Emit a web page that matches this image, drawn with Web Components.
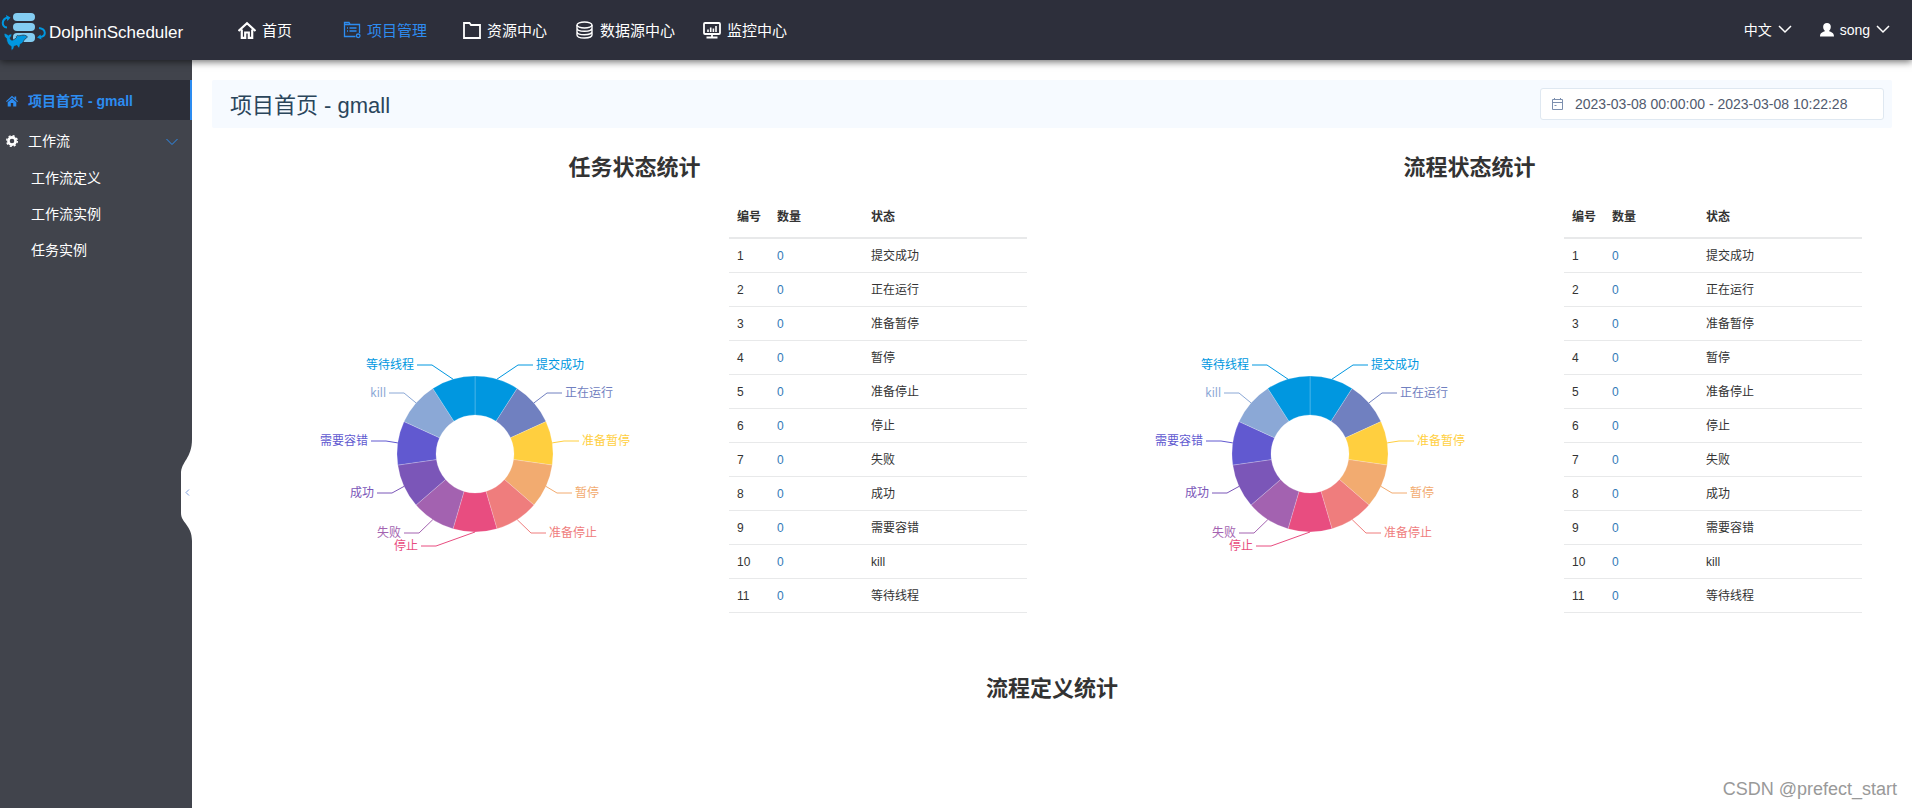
<!DOCTYPE html>
<html lang="zh-CN">
<head>
<meta charset="utf-8">
<title>DolphinScheduler</title>
<style>
  html, body { margin: 0; }
  body { font-family: "Liberation Sans", "Noto Sans CJK SC", sans-serif; font-size: 14px; color: #333; background: #fff; }
</style>
</head>
<body>
<ds-app></ds-app>
<script>
const define = (name, html, setup) => {
  const template = document.createElement('template');
  template.innerHTML = html;
  customElements.define(name, class extends HTMLElement {
    constructor() {
      super();
      this.attachShadow({ mode: 'open' }).append(template.content.cloneNode(true));
    }
    connectedCallback() {
      if (setup && !this.ready) { this.ready = true; setup(this, this.shadowRoot); }
    }
  });
};

const STATES = [
  { name: '提交成功', color: '#0097e0', x: 43, y: -89 },
  { name: '正在运行', color: '#7080c0', x: 72, y: -61 },
  { name: '准备暂停', color: '#ffcf3f', x: 89, y: -13 },
  { name: '暂停', color: '#f2ab70', x: 82, y: 39 },
  { name: '准备停止', color: '#ef7d7d', x: 56, y: 79 },
  { name: '停止', color: '#e84d80', x: -39, y: 92 },
  { name: '失败', color: '#a362b0', x: -56, y: 79 },
  { name: '成功', color: '#7b56b8', x: -83, y: 39 },
  { name: '需要容错', color: '#6159d0', x: -89, y: -13 },
  { name: 'kill', color: '#8ba8d6', x: -71, y: -61 },
  { name: '等待线程', color: '#0097e0', x: -43, y: -89 }
];

define('ds-nav-item', `
<style>
  :host { display: block; }
  a { display: flex; align-items: center; gap: 6px; color: #fff; font-size: 15px; line-height: 20px; text-decoration: none; white-space: nowrap; }
  :host([active]) a { color: #2d8cf0; }
  span { padding-top: 1px; }
  ::slotted(svg) { width: 18px; height: 18px; flex: none; }
</style>
<a href="#"><slot name="icon"></slot><span><slot></slot></span></a>`);

define('ds-header', `
<style>
  :host { display: flex; align-items: center; height: 60px; background: #2d2f3b; color: #fff; position: relative; z-index: 2; box-shadow: 0 2px 7px rgba(0,0,0,.55); }
  .logo { display: flex; align-items: center; width: 238px; gap: 3px; color: #fff; text-decoration: none; font-size: 17px; line-height: 20px; }
  .logo svg { width: 46px; height: 50px; flex: none; }
  .logo span { padding-top: 5px; }
  nav { display: grid; grid-template-columns: 105px 120px 113px 127px auto; }
  .right { margin-left: auto; display: flex; gap: 28px; padding-right: 22px; }
  button { display: flex; align-items: center; gap: 6px; padding: 0; border: 0; background: none; color: #fff; font: inherit; font-size: 14px; line-height: 20px; }
</style>
<a class="logo" href="#">
  <svg viewBox="0 0 46 50">
    <g fill="#84cdf2"><rect x="13" y="8" width="22" height="8" rx="4"/><rect x="13" y="18" width="22" height="8" rx="4"/><rect x="13" y="28" width="22" height="9" rx="4"/></g>
    <g fill="none" stroke="#0097e0" stroke-width="2"><path d="M8 12.500C1.500 13.500 1 22 7 22.500M39 23C46.500 24 46.500 31.500 40 32"/></g>
    <path fill="#0097e0" d="M6 10l4.500 2.500L7.500 16zM40.500 29.500l-3.500 3 4.500 2z"/>
    <path fill="#0097e0" stroke="#2d2f3b" stroke-width=".7" d="M4 28.500c2 0 3 .5 4.200 1.800 1-1 2-1.300 3.800-1.300-.3 2-1.300 3-2 4 .5 1.800 1.500 2.500 3 2 1.500-.5 2.500-1.500 3.500-2.500-.5-1 .2-1.800 1-2 1 .3 1.500.3 2.500.2 2-.5 4-1 6 0 1.300.5 1.500 1 .8 2-1 1.200-1.800 1.300-2.500 1.800-.5 2-2 4-4.300 5 .3 1.500-.3 2.500-1.500 3.500l-1.500-2.500c-1.500.5-2.500.7-3 1 .2 1.500-.8 3-2.500 4-.5-1.500-.5-3-.3-4C8 40 6.500 37 6.500 33.500 4.800 32.500 4 30.500 4 28.500z"/>
  </svg>
  <span>DolphinScheduler</span>
</a>
<nav>
  <ds-nav-item><svg slot="icon" viewBox="0 0 18 18" fill="none" stroke="currentColor" stroke-width="2.200"><path d="M.5 10L9 2.300l8.500 7.700M3.800 8.500v8.300h3.400v-5.300h3.600v5.300h3.400V8.500"/></svg>首页</ds-nav-item>
  <ds-nav-item active><svg slot="icon" viewBox="0 0 18 18" fill="none" stroke="currentColor" stroke-width="1.300"><path d="M12.500 15.500H1.500v-14H6l1.200 2H16.500v8.500M1.500 3.500h5M4 7h1M6.500 7h7M4 10h1M6.500 10h7"/><circle cx="15.200" cy="14.800" r="1.800"/></svg>项目管理</ds-nav-item>
  <ds-nav-item><svg slot="icon" viewBox="0 0 18 18" fill="none" stroke="currentColor" stroke-width="1.800"><path d="M1 2h5.500l1.500 2H17v13H1z"/></svg>资源中心</ds-nav-item>
  <ds-nav-item><svg slot="icon" viewBox="0 0 18 18" fill="none" stroke="currentColor" stroke-width="1.400"><ellipse cx="8.500" cy="4" rx="7.500" ry="3"/><path d="M1 4v10c0 4 15 4 15 0V4M1 7.300c0 4 15 4 15 0M1 10.700c0 4 15 4 15 0"/></svg>数据源中心</ds-nav-item>
  <ds-nav-item><svg slot="icon" viewBox="0 0 18 18" fill="none" stroke="currentColor" stroke-width="1.800"><rect x="1" y="2" width="16" height="11" rx="1"/><path d="M9 13v3M3.500 16.500h11"/><path stroke-width="1.600" d="M5 11V8.500M7.700 11V6.500M10.400 11V7.500M13 11V5"/></svg>监控中心</ds-nav-item>
</nav>
<div class="right">
  <button type="button">中文<svg width="14" height="14" viewBox="0 0 14 14" fill="none" stroke="currentColor" stroke-width="1.500"><path d="M1 3l6 6 6-6"/></svg></button>
  <button type="button"><svg width="14" height="14" viewBox="0 0 14 14" fill="currentColor"><path d="M7 0c5 0 4.500 6 2 8 2 1.200 5 1.500 5 5.500H0C0 9.500 3 9.200 5 8 2.500 6 2 0 7 0z"/></svg>song<svg width="14" height="14" viewBox="0 0 14 14" fill="none" stroke="currentColor" stroke-width="1.500"><path d="M1 3l6 6 6-6"/></svg></button>
</div>`);

define('ds-sidebar', `
<style>
  :host { display: block; width: 192px; flex: none; background: #41444c; position: relative; }
  nav { padding-top: 20px; }
  a { display: flex; align-items: center; box-sizing: border-box; color: #fff; text-decoration: none; font-size: 14px; line-height: 20px; }
  .top { height: 40px; padding: 2px 14px 0 6px; gap: 10px; }
  .active { background: #2c2e38; color: #2d8cf0; font-weight: bold; border-right: 2px solid #2d8cf0; }
  .sub { height: 36px; padding-left: 31px; }
  .chevron { margin-left: auto; }
  button { position: absolute; top: 379px; right: 0; width: 11px; height: 102px; padding: 0; border: 0; background: none; }
  button svg { display: block; }
</style>
<nav>
  <a class="top active" href="#"><svg width="12" height="12" viewBox="0 0 12 12" fill="currentColor"><path d="M6 .8l2.500 2.300V1.500h1.700v3.200L12 6.300l-.8.8L6 2.500.8 7.100 0 6.300z"/><path d="M6 3.500l4.300 3.800v4.200H7.200V8H4.800v3.500H1.700V7.300z"/></svg>项目首页 - gmall</a>
  <a class="top" href="#"><svg width="12" height="12" viewBox="0 0 12 12" fill="none" stroke="currentColor"><circle cx="6" cy="6" r="3.600" stroke-width="2.600"/><circle cx="6" cy="6" r="5.300" stroke-width="1.400" stroke-dasharray="2.100 2.060"/></svg>工作流<svg class="chevron" width="12" height="12" viewBox="0 0 12 12" fill="none" stroke="#2d8cf0"><path d="M0.500 4l5.500 5.500L11.500 4"/></svg></a>
  <a class="sub" href="#">工作流定义</a>
  <a class="sub" href="#">工作流实例</a>
  <a class="sub" href="#">任务实例</a>
</nav>
<button type="button" aria-label="收起菜单"><svg width="11" height="102" viewBox="0 0 11 102" fill="none"><path fill="#fff" d="M11 0C11 20 0 22 0 35V74C0 84 11 86 11 102z"/><path stroke="#7d9fe0" d="M8 50.500L5 53.500l3 3"/></svg></button>`);

define('ds-donut', `
<style>
  :host { display: block; }
  svg { display: block; margin: 0 auto; font: 12px "Noto Sans", "Noto Sans CJK SC", sans-serif; }
</style>
<svg width="340" height="200" viewBox="-170 -100 340 200" role="img"></svg>`, (host, root) => {
  const step = Math.PI * 2 / STATES.length;
  const at = (r, a) => (r * Math.sin(a)).toFixed(2) + ' ' + (-r * Math.cos(a)).toFixed(2);
  root.querySelector('svg').innerHTML = STATES.map((s, i) => {
    const a = i * step, b = a + step, dir = Math.sign(s.x);
    return `<path fill="${s.color}" stroke="#fff" stroke-opacity=".2" d="M${at(39, a)}L${at(78, a)}A78 78 0 0 1 ${at(78, b)}L${at(39, b)}A39 39 0 0 0 ${at(39, a)}z"/>
      <path fill="none" stroke="${s.color}" d="M${at(78, a + step / 2)}L${s.x} ${s.y}h${15 * dir}"/>
      <text x="${s.x + 18 * dir}" y="${s.y + 4}" fill="${s.color}" text-anchor="${dir > 0 ? 'start' : 'end'}">${s.name}</text>`;
  }).join('');
});

define('ds-state-table', `
<style>
  :host { display: block; }
  table { width: 100%; border-collapse: collapse; table-layout: fixed; font-size: 12px; line-height: 17px; }
  th, td { text-align: left; padding: 9px 8px 7px; border-bottom: 1px solid #e8e9ea; }
  th { padding: 12px 8px 11px; border-bottom-width: 2px; }
  th:nth-child(1) { width: 24px; }
  th:nth-child(2) { width: 78px; }
  a { color: #337ab7; text-decoration: none; }
</style>
<table><thead><tr><th>编号</th><th>数量</th><th>状态</th></tr></thead><tbody></tbody></table>`, (host, root) => {
  root.querySelector('tbody').innerHTML = STATES.map((s, i) =>
    `<tr><td>${i + 1}</td><td><a href="#">0</a></td><td>${s.name}</td></tr>`).join('');
});

define('ds-stat-panel', `
<style>
  :host { display: block; }
  h2 { margin: 0 0 14px; font-size: 22px; line-height: 30px; text-align: center; }
  .body { display: grid; grid-template-columns: 7fr 5fr; }
  ds-donut { padding: 157px 0 0 28px; }
  ds-state-table { padding: 0 25px; }
</style>
<h2><slot></slot></h2>
<div class="body"><ds-donut></ds-donut><ds-state-table></ds-state-table></div>`);

define('ds-page-title', `
<style>
  :host { display: flex; align-items: center; justify-content: space-between; height: 48px; padding: 0 8px 0 18px; background: #f6faff; border-radius: 2px; }
  h1 { margin: 0; font-size: 22px; line-height: 30px; font-weight: normal; color: #2a455b; padding-top: 4px; }
  label { display: flex; align-items: center; gap: 12px; box-sizing: border-box; width: 344px; height: 32px; padding: 0 11px; background: #fff; border: 1px solid #dfe8f1; border-radius: 3px; }
  svg { flex: none; }
  input { flex: 1; min-width: 0; padding: 0; border: 0; outline: 0; background: none; font: inherit; font-size: 14px; color: #515a6e; }
</style>
<h1><slot></slot></h1>
<label><svg width="11" height="12" viewBox="0 0 11 12" fill="none" stroke="#7c8fae"><path d="M.5 1.500h10v10H.5zM.5 4.500h10M2.500 0v2M8.500 0v2M2.500 7.500h2"/></svg><input type="text" readonly aria-label="时间范围" value="2023-03-08 00:00:00 - 2023-03-08 10:22:28"></label>`);

define('ds-app', `
<style>
  :host { display: flex; flex-direction: column; min-height: 100vh; position: relative; }
  .page { display: flex; flex: 1; }
  main { flex: 1; min-width: 0; padding: 20px 20px 0; }
  .panels { display: grid; grid-template-columns: 1fr 1fr; padding: 25px 5px 0; }
  h2 { margin: 61px 0 0; font-size: 22px; line-height: 30px; text-align: center; }
  .mark { position: absolute; right: 15px; bottom: 7px; font-size: 18px; line-height: 24px; color: #999; }
</style>
<ds-header></ds-header>
<div class="page">
  <ds-sidebar></ds-sidebar>
  <main>
    <ds-page-title>项目首页 - gmall</ds-page-title>
    <div class="panels">
      <ds-stat-panel>任务状态统计</ds-stat-panel>
      <ds-stat-panel>流程状态统计</ds-stat-panel>
    </div>
    <h2>流程定义统计</h2>
  </main>
</div>
<div class="mark">CSDN @prefect_start</div>`);
</script>
</body>
</html>
